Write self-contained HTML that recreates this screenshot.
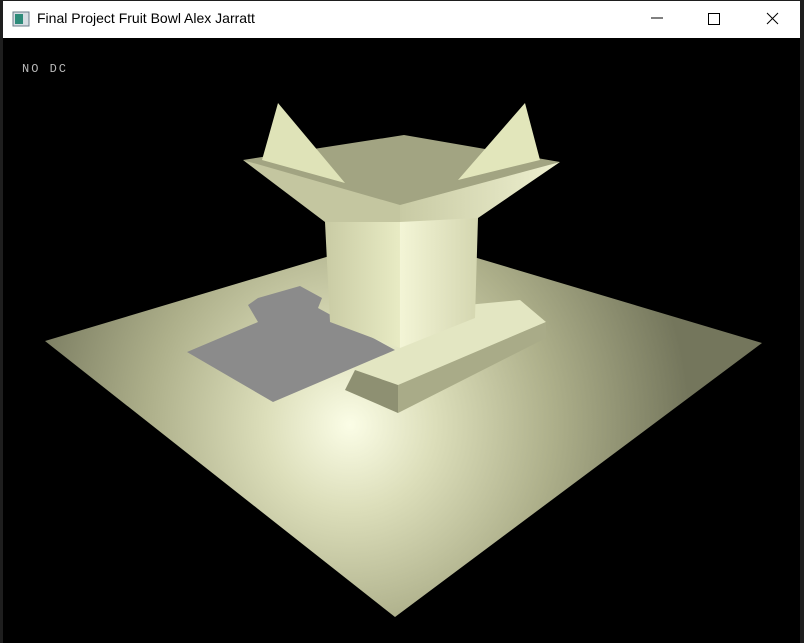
<!DOCTYPE html>
<html><head><meta charset="utf-8"><style>
html,body{margin:0;padding:0;width:804px;height:643px;overflow:hidden;background:#1e1e1e;}
#tb{position:absolute;left:3px;top:1px;width:797px;height:37px;background:#fff;}
#tt{position:absolute;left:37px;top:10px;font:14px "Liberation Sans",sans-serif;color:#000;}
#gl{position:absolute;left:3px;top:38px;width:797px;height:605px;background:#000;}
</style></head><body>
<div id="tb"></div>
<svg style="position:absolute;left:0;top:0" width="804" height="643">
<rect x="13" y="12" width="16" height="14" fill="#d6dde3" stroke="#6b7c8a"/>
<rect x="15" y="14" width="8" height="10" fill="#2e8b7a"/>
<line x1="651" y1="18" x2="663" y2="18" stroke="#000"/>
<rect x="708.5" y="13.5" width="11" height="11" fill="none" stroke="#000"/>
<path d="M767 13 L778 24 M778 13 L767 24" stroke="#000"/>
</svg>
<div id="tt">Final Project Fruit Bowl Alex Jarratt</div>
<div id="gl"></div>
<svg style="position:absolute;left:0;top:0" width="804" height="643">
<defs>
<radialGradient id="fl" cx="350" cy="425" r="340" gradientUnits="userSpaceOnUse">
<stop offset="0" stop-color="#fbfde6"/><stop offset="0.25" stop-color="#dcdeba"/>
<stop offset="0.6" stop-color="#adaf8a"/><stop offset="1" stop-color="#74765c"/></radialGradient>
<linearGradient id="cl" x1="0" y1="0" x2="1" y2="0"><stop offset="0" stop-color="#c9cba4"/><stop offset="1" stop-color="#e8ebc4"/></linearGradient>
<linearGradient id="cr" x1="0" y1="0" x2="1" y2="0"><stop offset="0" stop-color="#f3f5d6"/><stop offset="1" stop-color="#d4d6b0"/></linearGradient>
<linearGradient id="fr" x1="0" y1="0" x2="1" y2="0"><stop offset="0" stop-color="#c8caa4"/><stop offset="1" stop-color="#eef0cf"/></linearGradient>
</defs>
<text x="22" y="72" font-family="Liberation Mono,monospace" font-size="12" fill="#bbb" letter-spacing="2">NO DC</text>
<polygon points="45,341 400,235 762,343 395,617" fill="url(#fl)"/>
<polygon points="330,318 520,300 546,322 398,385 355,370" fill="#e3e6c2"/>
<polygon points="355,370 398,385 398,413 345,390" fill="#8e9072"/>
<polygon points="398,385 546,322 546,338 398,413" fill="#a9ab88"/>
<polygon points="187,352 258,322 248,305 258,298 300,286 322,298 318,308 395,350 273,402" fill="#8b8b8b"/>
<polygon points="325,222 400,210 400,348 330,322" fill="url(#cl)"/>
<polygon points="400,210 478,218 475,318 400,348" fill="url(#cr)"/>
<polygon points="243,160 404,135 560,162 398,210" fill="#a2a482"/>
<polygon points="243,160 400,205 400,222 325,222" fill="#c4c6a0"/>
<polygon points="400,205 560,162 478,218 400,222" fill="url(#fr)"/>
<polygon points="262,160 278,103 345,183" fill="#dfe3b8"/>
<polygon points="458,180 525,103 540,160" fill="#e2e6bb"/>
</svg>
</body></html>
